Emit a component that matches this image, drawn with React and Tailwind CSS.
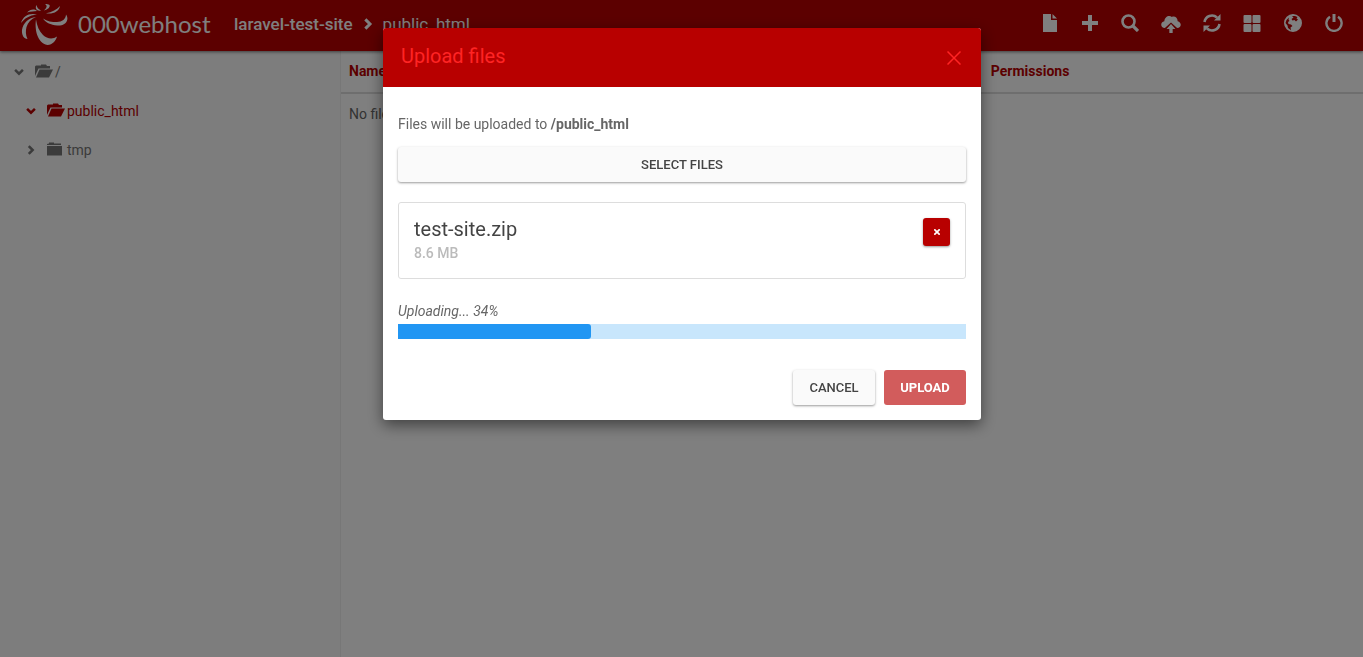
import React from "react";

function Logo() {
  return (
    <svg width="48" height="42" viewBox="20 3 48 42" fill="currentColor" aria-hidden="true">
      <path d="M36 19.500C34.500 29 37 43 47.500 45C52.500 45 56 40.500 57 36.500C53 39.500 47 39 43 35C39 31 37 26 36 19.500Z" />
      <path d="M43 18.500C47 24 53 25.500 60 25.500C66 25 69.500 19 66 14.500C66 19 62 22 57 22C52 22 47 21.500 43 18.500Z" />
      <path d="M36 17C29 17.500 23 23 22 30C21.500 35 24 39 27.500 39C25.500 35 25.500 31 26.500 27C28 22.500 31 19 36 17Z" />
      <path d="M37 14.500C30 12.500 23 15.500 21 23C24.500 18.500 29 15.500 37 14.500Z" />
      <path d="M37 11C34 8.500 30 9.500 27 12.500C31 11.300 34 11.300 37 11Z" />
      <path d="M41 10.500C37.500 8.500 37 7 36.500 5C34.500 8.500 37 11.500 41 10.500Z" />
      <path d="M44 10.500C48 9.500 50.500 7 49.500 5C48.500 4 46.500 4 45 4C48 6 46.500 8 44 10.500Z" />
      <path d="M46 13.300C53 14.500 59 11.500 60 6C57 9.800 52 12 46 13.300Z" />
    </svg>
  );
}

function Icon({ name, className = "size-[18px]" }) {
  const drawings = {
    file: <path d="M2 0H10V6H16V18H2ZM11.500 0L16 4.500H11.500Z" />,
    plus: <path d="M7 1H11V7H17V11H11V17H7V11H1V7H7Z" />,
    search: (
      <g fill="none" stroke="currentColor">
        <circle cx="7.500" cy="7.500" r="6" strokeWidth="2.600" />
        <path d="M12 12L17 17" strokeWidth="3.200" />
      </g>
    ),
    cloud: (
      <g>
        <path d="M3.500 13.500C-.8 13.500-.8 8 3 7.500C3.200 3 7.500 1.500 9.800 3.500C12.500 2.500 15 4.500 15 7.500C19 8.500 18.500 13.500 14.500 13.500L9 8.500Z" />
        <path d="M9 10L13 14.300H10.500V18H7.500V14.300H5Z" />
      </g>
    ),
    refresh: (
      <g>
        <path d="M1.500 8A7.500 7.500 0 0 1 14 3.500M16.500 10A7.500 7.500 0 0 1 4 14.500" fill="none" stroke="currentColor" strokeWidth="2.600" />
        <path d="M17.500 0V6.500H11ZM.5 18V11.500H7Z" />
      </g>
    ),
    grid: (
      <g>
        <rect x="0.500" y="1" width="8" height="8" rx="1" />
        <rect x="9.500" y="1" width="8" height="8" rx="1" />
        <rect x="0.500" y="10" width="8" height="8" rx="1" />
        <rect x="9.500" y="10" width="8" height="8" rx="1" />
      </g>
    ),
    globe: (
      <path
        fillRule="evenodd"
        d="M9 0A9 9 0 1 1 9 18A9 9 0 1 1 9 0ZM8 2L9.500 3.500L7.500 5L8.500 6.500L10.500 6L12 7.500L14 5.500L12.500 4.500L13.500 3L11 2ZM5 3.500L2.500 6L1.500 9L3.500 11.500L4 14L7 16.200L6.500 13.500L8.500 12L7 10.500L4.500 10L4 8L5.500 7L4.500 5.500Z"
      />
    ),
    power: (
      <g fill="none" stroke="currentColor" strokeWidth="2.400">
        <path d="M5 2.800A7.600 7.600 0 1 0 13 2.800" />
        <path d="M9 0V8" strokeWidth="3" />
      </g>
    ),
    chevronRight: <path d="M5 2L12 9L5 16" fill="none" stroke="currentColor" strokeWidth="4.500" />,
    chevronDown: <path d="M2 5L9 12L16 5" fill="none" stroke="currentColor" strokeWidth="4.500" />,
    folderOpen: <path d="M0 13V3.500L1 2.500H6V1.500H11L12 3H15V5.500H3.500ZM4.500 6.500H18L14 14.500H1Z" />,
    folder: <path d="M0 4V3L2 2.500V1.500H7V2.500H14V4ZM0 5H15V14.500H0Z" />,
  };
  return (
    <svg className={className} viewBox="0 0 18 18" fill="currentColor" aria-hidden="true">
      {drawings[name]}
    </svg>
  );
}

const actions = [
  ["file", "New file"],
  ["plus", "New folder"],
  ["search", "Search"],
  ["cloud", "Upload files"],
  ["refresh", "Refresh"],
  ["grid", "Change view"],
  ["globe", "Language"],
  ["power", "Log out"],
];

const iconSizes = { cloud: "size-5", globe: "h-[18px] w-5" };

function Header() {
  return (
    <header className="relative flex h-[51px] items-center bg-[#b80000] pr-5 pl-5 text-white shadow-[0_1px_3px_rgba(0,0,0,0.5)]">
      <a href="#home" className="flex items-center gap-[10px] pb-[3px]">
        <Logo />
        <span className="w-[132px] font-[Lato,sans-serif] text-[24px] leading-8">000webhost</span>
      </a>
      <nav aria-label="Breadcrumb" className="ml-6 flex items-center gap-[9px] pb-[3px] text-[17px] leading-6">
        <a href="#site" className="font-medium">laravel-test-site</a>
        <Icon name="chevronRight" className="size-3" />
        <a href="#public">public_html</a>
      </nav>
      <div className="ml-auto flex items-center gap-[22px] pb-[5px]">
        {actions.map(([icon, label]) => (
          <button key={icon} type="button" aria-label={label}>
            <Icon name={icon} className={iconSizes[icon]} />
          </button>
        ))}
      </div>
    </header>
  );
}

function Sidebar() {
  return (
    <aside className="w-[341px] shrink-0 border-r border-[#eee] bg-[#fafafa] pt-px text-[14px] leading-5 text-[#777]">
      <a href="#root" className="flex h-[39px] items-center pl-[14px]">
        <Icon name="chevronDown" className="mr-[11px] size-[10px]" />
        <Icon name="folderOpen" className="mr-[2px] size-[18px]" />/
      </a>
      <a href="#public" className="flex h-[39px] items-center pl-[26px] text-[#b80000]">
        <Icon name="chevronDown" className="mr-[11px] size-[10px]" />
        <Icon name="folderOpen" className="mr-[2px] size-[18px]" />public_html
      </a>
      <a href="#tmp" className="flex h-[39px] items-center pl-[26px]">
        <Icon name="chevronRight" className="mr-[11px] size-[10px]" />
        <Icon name="folder" className="mr-[2px] size-[18px]" />tmp
      </a>
    </aside>
  );
}

function FileList() {
  return (
    <main className="flex-1 bg-white">
      <table className="w-full text-left text-[14px] leading-5 text-[#666]">
        <thead>
          <tr className="h-[42px] border-b-2 border-[#ddd] text-[#b80000]">
            <th className="w-[63%] pb-[2px] pl-2 font-bold">Name</th>
            <th className="pb-[2px] pl-[6px] font-bold">Permissions</th>
          </tr>
        </thead>
        <tbody>
          <tr className="h-10">
            <td colSpan={2} className="pl-2">No files</td>
          </tr>
        </tbody>
      </table>
    </main>
  );
}

const raised = "rounded-[3px] shadow-[0_1px_3px_rgba(0,0,0,0.24),0_1px_2px_rgba(0,0,0,0.2)]";

function UploadDialog() {
  return (
    <section role="dialog" aria-modal="true" aria-labelledby="dialog-title" className="w-[598px] max-w-full overflow-hidden rounded-[3px] bg-white text-[14px] leading-5 text-[#666] shadow-[0_5px_15px_rgba(0,0,0,0.5)]">
      <div className="flex h-[59px] items-center justify-between bg-[#b80000] pr-5 pl-[18px] text-[#ff2424]">
        <h1 id="dialog-title" className="pb-1 text-[20px] leading-7">Upload files</h1>
        <button type="button" aria-label="Close">
          <svg width="14" height="14" viewBox="0 0 14 14" fill="none" stroke="currentColor" strokeWidth="1.500" aria-hidden="true">
            <path d="M.5 .5L13.500 13.500M13.500 .5L.5 13.500" />
          </svg>
        </button>
      </div>
      <div className="px-[15px] pt-[27px] pb-[15px]">
        <p>Files will be uploaded to <b>/public_html</b></p>
        <button type="button" className={"mt-[13px] h-[35px] w-full bg-[#fafafa] text-[13px] font-medium text-[#444] " + raised}>
          SELECT FILES
        </button>
        <div className="mt-5 flex h-[77px] items-start justify-between rounded-[3px] border border-[#ddd] p-[15px]">
          <div>
            <p className="text-[20px] leading-[22px] text-[#444]">test-site.zip</p>
            <p className="mt-[3px] font-medium text-[#bbb]">8.6 MB</p>
          </div>
          <button type="button" aria-label="Remove test-site.zip" className={"flex h-7 w-[27px] items-center justify-center bg-[#b80000] text-white " + raised}>
            <svg width="6" height="6" viewBox="0 0 6 6" fill="none" stroke="currentColor" strokeWidth="1.700" aria-hidden="true">
              <path d="M.3 .3L5.700 5.700M5.700 .3L.3 5.700" />
            </svg>
          </button>
        </div>
        <p id="upload-status" className="mt-[22px] italic">Uploading... 34%</p>
        <div role="progressbar" aria-labelledby="upload-status" aria-valuenow={34} aria-valuemin={0} aria-valuemax={100} className="mt-[3px] h-[15px] bg-[#c8e6fc]">
          <div className="h-full rounded-r-[3px] bg-[#2196f3]" style={{ width: "34%" }} />
        </div>
        <div className="mt-[31px] flex justify-end gap-[9px] text-[13px]">
          <button type="button" className={"h-[35px] w-[82px] bg-[#fafafa] font-medium text-[#444] " + raised}>CANCEL</button>
          <button type="button" disabled className="h-[35px] w-[82px] rounded-[3px] bg-[#d25c5c] font-bold text-white">UPLOAD</button>
        </div>
      </div>
    </section>
  );
}

export default function App() {
  return (
    <div className="flex min-h-screen flex-col font-[Roboto,sans-serif]">
      <Header />
      <div className="flex flex-1">
        <Sidebar />
        <FileList />
      </div>
      <div className="fixed inset-0 flex items-start justify-center overflow-auto bg-black/50 pt-7 pl-px">
        <UploadDialog />
      </div>
    </div>
  );
}
